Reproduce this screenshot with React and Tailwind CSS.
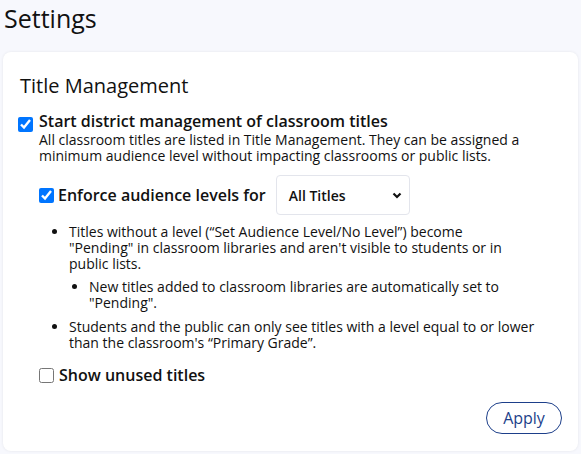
import React from "react";

function Check({ checked }) {
  return (
    <input
      type="checkbox"
      defaultChecked={checked}
      className="m-0 w-[15px] h-[15px] shrink-0 accent-[#0075ff]"
    />
  );
}

export default function App() {
  return (
    <div
      className="min-h-[454px] bg-[#f7f8fd] text-[#111111]"
      style={{ fontFamily: "'Open Sans', 'Noto Sans', sans-serif" }}
    >
      <h1 className="pl-[4px] pt-[3px] text-[25px] leading-[30px] font-normal">Settings</h1>
      <div className="mx-[3px] mt-[19px] h-[399px] rounded-[8px] bg-white shadow-[0_0_3px_rgba(0,0,0,0.08)] pl-[15px] pr-[16px] pt-[22px]">
        <h2 className="pl-[2px] text-[20px] leading-[24px] font-normal">Title Management</h2>
        <div className="mt-[14px] flex gap-[6px]">
          <div className="pt-[2px]">
            <Check checked />
          </div>
          <div className="flex-1">
            <div className="text-[16px] leading-[18px] font-semibold">
              Start district management of classroom titles
            </div>
            <p className="mt-[2px] text-[14px] leading-[16px]">
              All classroom titles are listed in Title Management. They can be assigned a
              <br />
              minimum audience level without impacting classrooms or public lists.
            </p>
            <div className="mt-[11px] flex items-center gap-[4px]">
              <Check checked />
              <span className="text-[16px] font-semibold">Enforce audience levels for</span>
              <div className="ml-[6px] flex h-[40px] w-[134px] items-center justify-between rounded-[4px] border border-[#e3e5ec] pl-[12px] pr-[7px]">
                <span className="text-[14px] font-semibold">All Titles</span>
                <svg width="10" height="7" viewBox="0 0 10 7">
                  <path d="M1.5 1.5 L5 5 L8.5 1.5" fill="none" stroke="#111" strokeWidth="2.2" />
                </svg>
              </div>
            </div>
            <ul className="mt-[9px] pl-[30px] list-disc text-[14px] leading-[16px]">
              <li>
                Titles without a level (“Set Audience Level/No Level”) become
                <br />
                "Pending" in classroom libraries and aren't visible to students or in
                <br />
                public lists.
                <ul className="mt-[7px] pl-[20px] list-disc">
                  <li>
                    New titles added to classroom libraries are automatically set to
                    <br />
                    "Pending".
                  </li>
                </ul>
              </li>
              <li className="mt-[8px]">
                Students and the public can only see titles with a level equal to or lower
                <br />
                than the classroom's “Primary Grade”.
              </li>
            </ul>
            <div className="mt-[12px] flex items-center gap-[5px]">
              <Check />
              <span className="text-[16px] font-semibold">Show unused titles</span>
            </div>
            <div className="mt-[15px] flex justify-end">
              <button className="h-[32px] w-[76px] rounded-full border border-[#1d3f8a] text-[16px] text-[#1d3f8a]">
                Apply
              </button>
            </div>
          </div>
        </div>
      </div>
    </div>
  );
}
